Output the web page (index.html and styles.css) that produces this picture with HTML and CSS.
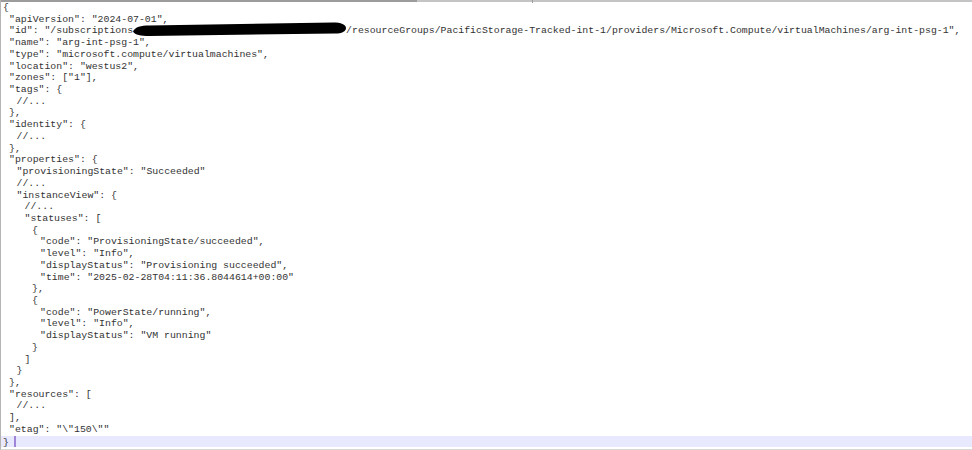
FILE: index.html
```html
<!DOCTYPE html>
<html lang="en">
<head>
    <meta charset="UTF-8">
    <title>vm.json</title>
    <link rel="stylesheet" href="styles.css">
</head>
<body>
    <div class="editor">
        <div class="topbar"><div class="thumb"></div><div class="tick"></div></div>
        <pre class="code"><div class="line">{</div><div class="line l1">"apiVersion": "2024-07-01",</div><div class="line l1">"id": "/subscriptions<svg class="redact" width="213" height="11" viewBox="0 0 213 11"><path d="M0 6.5 C2 2 8 0.5 16 0.5 L200 -2.5 C208 -2.5 213 -0.5 213 3 C213 6.5 209 8.5 202 8.5 L16 11 C8 11 2 10 0 6.5 Z" fill="#000"/></svg>/resourceGroups/PacificStorage-Tracked-int-1/providers/Microsoft.Compute/virtualMachines/arg-int-psg-1",</div><div class="line l1">"name": "arg-int-psg-1",</div><div class="line l1">"type": "microsoft.compute/virtualmachines",</div><div class="line l1">"location": "westus2",</div><div class="line l1">"zones": ["1"],</div><div class="line l1">"tags": {</div><div class="line l2">//...</div><div class="line l1">},</div><div class="line l1">"identity": {</div><div class="line l2">//...</div><div class="line l1">},</div><div class="line l1">"properties": {</div><div class="line l2">"provisioningState": "Succeeded"</div><div class="line l2">//...</div><div class="line l2">"instanceView": {</div><div class="line l3">//...</div><div class="line l3">"statuses": [</div><div class="line l4">{</div><div class="line l5">"code": "ProvisioningState/succeeded",</div><div class="line l5">"level": "Info",</div><div class="line l5">"displayStatus": "Provisioning succeeded",</div><div class="line l5">"time": "2025-02-28T04:11:36.8044614+00:00"</div><div class="line l4">},</div><div class="line l4">{</div><div class="line l5">"code": "PowerState/running",</div><div class="line l5">"level": "Info",</div><div class="line l5">"displayStatus": "VM running"</div><div class="line l4">}</div><div class="line l3">]</div><div class="line l2">}</div><div class="line l1">},</div><div class="line l1">"resources": [</div><div class="line l2">//...</div><div class="line l1">],</div><div class="line l1">"etag": "\"150\""</div><div class="line current">} <span class="caret"></span></div></pre>
    </div>
</body>
</html>
```

FILE: styles.css
```css
* {
    box-sizing: border-box;
    margin: 0;
    padding: 0;
}

body {
    background-color: #ffffff;
    width: 972px;
    height: 450px;
    overflow: hidden;
}

.editor {
    height: 450px;
    border-left: 1px solid #b4b4b4;
    border-bottom: 1px solid #d8d8d8;
    display: flex;
    flex-direction: column;
}

.topbar {
    height: 2px;
    background-color: #c4c4c4;
    display: flex;
    position: relative;
}

.thumb {
    width: 416px;
    background-color: #9c9c9c;
}

.tick {
    position: absolute;
    left: 531px;
    top: 0;
    width: 1px;
    height: 3px;
    background-color: #9c9c9c;
}

.code {
    font-family: "Liberation Mono", "Courier New", monospace;
    font-size: 9.85px;
    line-height: 11.73px;
    color: #333333;
    white-space: pre;
}

.line {
    height: 11.73px;
    padding-left: 2px;
}

/* indent levels */
.l1 { padding-left: 8px; }
.l2 { padding-left: 15.5px; }
.l3 { padding-left: 23.5px; }
.l4 { padding-left: 31px; }
.l5 { padding-left: 39px; }

.line.current {
    background-color: #e8e8ff;
}

.redact {
    overflow: visible;
    vertical-align: -3px;
}

.caret {
    display: inline-block;
    width: 2px;
    height: 11px;
    margin-left: -1px;
    background-color: #a084d8;
    vertical-align: -2px;
}
```
